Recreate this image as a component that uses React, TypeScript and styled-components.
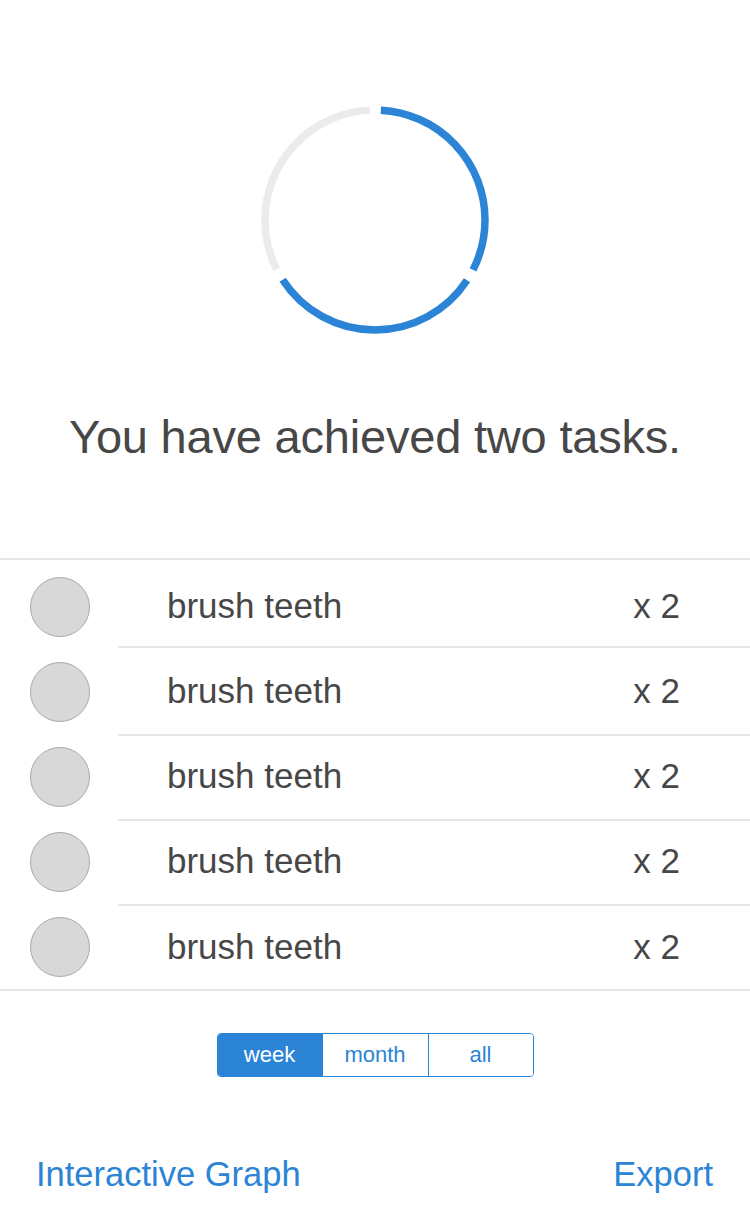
import React from "react";
import styled, { createGlobalStyle } from "styled-components";

const Global = createGlobalStyle`
  html, body { margin: 0; padding: 0; background: #fff; }
  body { font-family: "Liberation Sans", Arial, sans-serif; }
  * { box-sizing: border-box; }
`;

const BLUE = "#2b84d6";

const Page = styled.div`
  width: 750px;
  height: 1218px;
  display: flex;
  flex-direction: column;
  background: #fff;
  overflow: hidden;
`;

const RingWrap = styled.div`
  display: flex;
  justify-content: center;
  padding-top: 100px;
  height: 340px;
`;

const Title = styled.h1`
  margin: 67px 0 0;
  height: 60px;
  text-align: center;
  font-size: 47px;
  font-weight: 400;
  line-height: 60px;
  color: #474747;
  letter-spacing: -0.2px;
`;

const List = styled.div`
  margin-top: 91px;
  border-top: 2px solid #e6e6e6;
  border-bottom: 2px solid #e6e6e6;
  display: flex;
  flex-direction: column;
`;

const Row = styled.div<{ $h: number }>`
  height: ${(p) => p.$h}px;
  display: flex;
  align-items: center;
`;

const Dot = styled.div<{ $shift: number }>`
  width: 60px;
  height: 60px;
  border-radius: 50%;
  background: #d8d8d8;
  border: 1px solid #a9a9a9;
  margin-left: 30px;
  margin-top: ${(p) => Math.max(p.$shift, 0) * 2}px;
  margin-bottom: ${(p) => Math.max(-p.$shift, 0) * 2}px;
  flex-shrink: 0;
`;

const RowBody = styled.div<{ $last?: boolean; $shift: number }>`
  flex: 1;
  align-self: stretch;
  margin-left: 28px;
  display: flex;
  align-items: center;
  padding: ${(p) => Math.max(p.$shift, 0) * 2}px 70px
    ${(p) => Math.max(-p.$shift, 0) * 2}px 49px;
  border-bottom: ${(p) => (p.$last ? "none" : "2px solid #e6e6e6")};
`;

const TaskName = styled.span`
  flex: 1;
  font-size: 35px;
  color: #474747;
`;

const Count = styled.span`
  font-size: 35px;
  color: #474747;
`;

const SegWrap = styled.div`
  display: flex;
  justify-content: center;
  margin-top: 42px;
`;

const Seg = styled.div`
  display: flex;
  border: 1px solid ${BLUE};
  border-radius: 4px;
  overflow: hidden;
  height: 44px;
`;

const SegItem = styled.div<{ $active?: boolean; $w: number }>`
  width: ${(p) => p.$w}px;
  display: flex;
  align-items: center;
  justify-content: center;
  font-size: 22px;
  color: ${(p) => (p.$active ? "#fff" : BLUE)};
  background: ${(p) => (p.$active ? BLUE : "#fff")};
  & + & {
    border-left: 1px solid ${BLUE};
  }
`;

const Footer = styled.div`
  display: flex;
  justify-content: space-between;
  align-items: center;
  padding: 0 37px 0 36px;
  margin-top: 72px;
  height: 50px;
`;

const LinkText = styled.span`
  font-size: 34.5px;
  color: ${BLUE};
`;

const Ring = () => {
  const r = 110;
  const c = 2 * Math.PI * r;
  const seg = c / 3;
  const gap = 12;
  const arc = seg - gap;
  const arcs = [
    { color: BLUE, start: 0 },
    { color: BLUE, start: seg },
    { color: "#ebebeb", start: 2 * seg },
  ];
  return (
    <svg width="240" height="240" viewBox="0 0 240 240">
      {arcs.map((a, i) => (
        <circle
          key={i}
          cx="120"
          cy="120"
          r={r}
          fill="none"
          stroke={a.color}
          strokeWidth="7.5"
          strokeDasharray={`${arc} ${c - arc}`}
          strokeDashoffset={-(a.start + gap / 2)}
          transform="rotate(-90 120 120)"
        />
      ))}
    </svg>
  );
};

const rows = [
  { h: 88, shift: 3 },
  { h: 88, shift: 0 },
  { h: 85, shift: -1.5 },
  { h: 85, shift: -2 },
  { h: 83, shift: -1 },
];

export default function App() {
  return (
    <Page>
      <Global />
      <RingWrap>
        <Ring />
      </RingWrap>
      <Title>You have achieved two tasks.</Title>
      <List>
        {rows.map((r, i) => (
          <Row key={i} $h={r.h}>
            <Dot $shift={r.shift} />
            <RowBody $shift={r.shift} $last={i === rows.length - 1}>
              <TaskName>brush teeth</TaskName>
              <Count>x 2</Count>
            </RowBody>
          </Row>
        ))}
      </List>
      <SegWrap>
        <Seg>
          <SegItem $active $w={104}>week</SegItem>
          <SegItem $w={106}>month</SegItem>
          <SegItem $w={105}>all</SegItem>
        </Seg>
      </SegWrap>
      <Footer>
        <LinkText>Interactive Graph</LinkText>
        <LinkText>Export</LinkText>
      </Footer>
    </Page>
  );
}
